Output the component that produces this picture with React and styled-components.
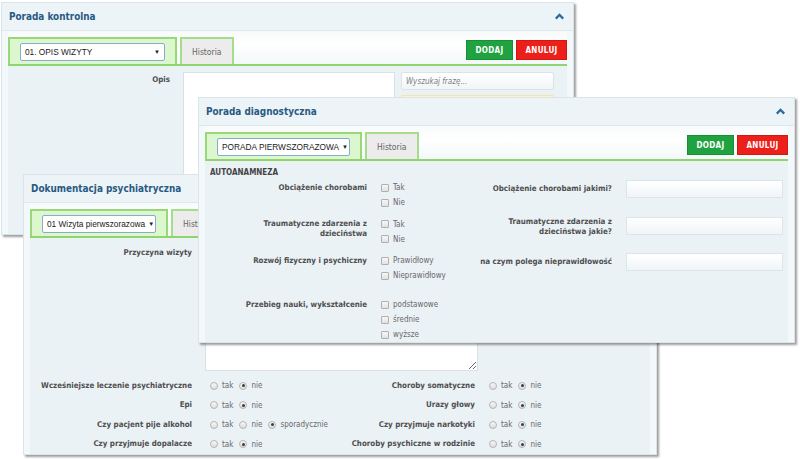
import React from 'react';
import styled, { createGlobalStyle } from 'styled-components';

const SANS = `"DejaVu Sans Condensed", "DejaVu Sans", Tahoma, sans-serif`;
const ARIAL = `"Liberation Sans", Arial, sans-serif`;

const Global = createGlobalStyle`
  html, body { margin: 0; padding: 0; background: #fff; }
  body { font-family: ${SANS}; font-stretch: semi-condensed; overflow: hidden; }
  * { box-sizing: border-box; }
`;

const Desktop = styled.main`
  position: relative;
  width: 800px;
  height: 459px;
  overflow: hidden;
  background: #fff;
`;

const Win = styled.section`
  position: absolute;
  left: ${(p) => p.$x}px;
  top: ${(p) => p.$y}px;
  width: ${(p) => p.$w}px;
  height: ${(p) => p.$h}px;
  z-index: ${(p) => p.$z};
  display: flex;
  flex-direction: column;
  overflow: hidden;
  background: #f3f8fa;
  border: 1px solid #dbe4e9;
  box-shadow: 2px 2px 2px rgba(0, 0, 0, 0.38);
`;

const Header = styled.header`
  flex: none;
  height: 28px;
  display: flex;
  align-items: center;
  justify-content: space-between;
  padding: 0 9px 1px 7px;
  background: #edf4f7;
  border-bottom: 1px solid #dfe8ed;
`;

const Title = styled.h2`
  margin: 0;
  font-family: ${SANS};
  font-size: 9.9px;
  font-weight: bold;
  color: #285a83;
`;

const Chevron = () => (
  <svg width="9" height="7" viewBox="0 0 10 7" aria-hidden="true">
    <path d="M5 0 L10 5 L8.2 6.8 L5 3.6 L1.8 6.8 L0 5 Z" fill="#2a6aa0" />
  </svg>
);

const Body = styled.div`
  flex: 1;
  display: flex;
  flex-direction: column;
  padding: 0 6px;
  min-height: 0;
`;

const TabBar = styled.nav`
  flex: none;
  height: 35px;
  padding-top: 6px;
  display: flex;
  align-items: stretch;
  gap: 3px;
  border-bottom: 2px solid #8fd46c;
  background: linear-gradient(#f7fafb, #ffffff 40%, #f3f8fa);
`;

const Tab = styled.div`
  flex: none;
  display: flex;
  align-items: center;
  justify-content: center;
  padding: 0 10px;
  border: 2px solid ${(p) => (p.$active ? '#98d878' : '#a6dd8a')};
  border-bottom: none;
  background: ${(p) => (p.$active ? '#dcf6cd' : '#ececec')};
  font-family: ${SANS};
  font-size: 8.5px;
  color: #666;
`;

const Select = styled.div`
  flex: none;
  width: ${(p) => p.$w}px;
  height: 18px;
  display: flex;
  align-items: center;
  justify-content: space-between;
  padding: 0 4px 0 4px;
  overflow: hidden;
  background: #fff;
  border: 1px solid #86acd6;
  border-radius: 2px;
  font-family: ${ARIAL};
  font-size: 8.3px;
  color: #1a1a1a;
  white-space: nowrap;
`;

const Caret = styled.span`
  flex: none;
  font-size: 6px;
  color: #222;
  margin-left: 3px;
`;

const Actions = styled.div`
  margin-left: auto;
  display: flex;
  gap: 3px;
  padding: 3px 0 4px;
`;

const Btn = styled.button`
  width: ${(p) => p.$w}px;
  height: 20px;
  padding: 0;
  border: 1px solid ${(p) => (p.$danger ? '#cf1a14' : '#178f33')};
  background: ${(p) => (p.$danger ? '#ec1f1a' : '#1fa23f')};
  color: #fff;
  font-family: ${SANS};
  font-size: 8px;
  font-weight: bold;
  letter-spacing: 0.3px;
`;

const Content = styled.div`
  flex: 1;
  min-height: 0;
  display: flex;
  flex-direction: column;
  padding: ${(p) => p.$pt}px 0 0 ${(p) => p.$pl || 0}px;
  background: #ebf2f6;
`;

const Line = styled.div`
  display: flex;
  align-items: flex-start;
`;

const FieldLabel = styled.div`
  flex: none;
  width: ${(p) => p.$w}px;
  padding-top: ${(p) => p.$pt || 0}px;
  text-align: right;
  font-family: ${SANS};
  font-size: 7.9px;
  font-weight: bold;
  line-height: 10px;
  color: #4f4f4f;
  white-space: nowrap;
`;

const Area = styled.textarea`
  flex: none;
  display: block;
  width: ${(p) => p.$w}px;
  height: ${(p) => p.$h}px;
  margin: 0 0 0 13px;
  padding: 0;
  background: #fff;
  border: 1px solid #d9e1e6;
  border-radius: 0;
  outline: none;
`;

const SideCol = styled.div`
  flex: none;
  width: 153px;
  margin-left: 6px;
  display: flex;
  flex-direction: column;
  gap: 5px;
`;

const Search = styled.div`
  height: 18px;
  display: flex;
  align-items: center;
  padding: 0 4px;
  border: 1px solid #dbe3e8;
  border-radius: 2px;
  background: linear-gradient(#ffffff, #f1f5f7);
  font-family: ${SANS};
  font-size: 8px;
  font-style: italic;
  color: #808080;
`;

const Notice = styled.div`
  height: 30px;
  background: #fbf3c9;
  border: 1px solid #f1e6aa;
`;

const Section = styled.h3`
  margin: 0 0 2px;
  font-family: ${SANS};
  font-size: 8px;
  font-weight: bold;
  line-height: 10px;
  color: #444;
`;

const Rows = styled.div`
  display: flex;
  flex-direction: column;
  gap: 6.5px;
`;

const QRow = styled.div`
  display: grid;
  grid-template-columns: 157px 88px 129px 157px;
  column-gap: 14px;
  align-items: start;
  margin-top: ${(p) => p.$mt || 0}px;
`;

const QLabel = styled.div`
  padding-top: 2.5px;
  text-align: right;
  font-family: ${SANS};
  font-size: 7.9px;
  font-weight: bold;
  line-height: 10px;
  color: #4f4f4f;
`;

const SideLabel = styled.div`
  min-height: 18px;
  display: flex;
  align-items: center;
  justify-content: flex-end;
  text-align: right;
  font-family: ${SANS};
  font-size: 7.9px;
  font-weight: bold;
  line-height: 10px;
  color: #4f4f4f;
  white-space: nowrap;
`;

const TextBox = styled.div`
  height: 18px;
  border: 1px solid #dce5ea;
  background: linear-gradient(#ffffff, #f0f5f8);
`;

const Options = styled.div`
  display: flex;
  flex-direction: ${(p) => (p.$column ? 'column' : 'row')};
  align-items: ${(p) => (p.$column ? 'flex-start' : 'center')};
  gap: ${(p) => (p.$column ? 0 : 6)}px;
  margin-left: ${(p) => p.$ml || 0}px;
  width: ${(p) => (p.$w ? `${p.$w}px` : 'auto')};
  flex: none;
`;

const OptItem = styled.label`
  height: 15px;
  display: flex;
  align-items: center;
  gap: 4px;
  font-family: ${SANS};
  font-size: 8px;
  color: #686868;
  white-space: nowrap;
`;

const Box = styled.span`
  width: 8px;
  height: 8px;
  border: 1px solid #b0b0b0;
  border-radius: 1px;
  background: linear-gradient(#f7f7f7, #e2e2e2);
`;

const Circle = styled.span`
  position: relative;
  width: 8px;
  height: 8px;
  border: 1px solid #b4b4b4;
  border-radius: 50%;
  background: linear-gradient(#f7f7f7, #dedede);
  &::after {
    content: '';
    display: ${(p) => (p.$on ? 'block' : 'none')};
    position: absolute;
    left: 1.5px;
    top: 1.5px;
    width: 3px;
    height: 3px;
    border-radius: 50%;
    background: #3c3c3c;
  }
`;

const Spacer = styled.div`
  flex: none;
  height: ${(p) => p.$h}px;
`;

const RadioRow = styled.div`
  height: 20px;
  display: flex;
  align-items: center;
`;

const Check = ({ children }) => (
  <OptItem>
    <Box />
    {children}
  </OptItem>
);

const Radio = ({ on, children }) => (
  <OptItem>
    <Circle $on={on} />
    {children}
  </OptItem>
);

const YesNo = ({ value, extra, ml, w }) => (
  <Options $ml={ml} $w={w}>
    <Radio on={value === 'tak'}>tak</Radio>
    <Radio on={value === 'nie'}>nie</Radio>
    {extra && <Radio on={value === extra}>{extra}</Radio>}
  </Options>
);

const radioRows = [
  { l: 'Wcześniejsze leczenie psychiatryczne', lv: 'nie', r: 'Choroby somatyczne', rv: 'nie' },
  { l: 'Epi', lv: 'nie', r: 'Urazy głowy', rv: 'nie' },
  { l: 'Czy pacjent pije alkohol', lv: 'sporadycznie', extra: 'sporadycznie', r: 'Czy przyjmuje narkotyki', rv: 'nie' },
  { l: 'Czy przyjmuje dopalacze', lv: 'nie', r: 'Choroby psychiczne w rodzinie', rv: 'nie' },
];

const WindowHead = ({ title }) => (
  <Header>
    <Title>{title}</Title>
    <Chevron />
  </Header>
);

const Tabs = ({ value, selectW, buttons }) => (
  <TabBar>
    <Tab $active>
      <Select $w={selectW}>
        <span>{value}</span>
        <Caret>▼</Caret>
      </Select>
    </Tab>
    <Tab>Historia</Tab>
    {buttons && (
      <Actions>
        <Btn $w={47}>DODAJ</Btn>
        <Btn $w={51} $danger>
          ANULUJ
        </Btn>
      </Actions>
    )}
  </TabBar>
);

export default function App() {
  return (
    <>
      <Global />
      <Desktop>
        <Win $x={1} $y={2} $w={573} $h={233} $z={1}>
          <WindowHead title="Porada kontrolna" />
          <Body>
            <Tabs value="01. OPIS WIZYTY" selectW={145} buttons />
            <Content $pt={6}>
              <Line>
                <FieldLabel $w={162} $pt={3}>
                  Opis
                </FieldLabel>
                <Area $w={212} $h={200} readOnly />
                <SideCol>
                  <Search>Wyszukaj frazę...</Search>
                  <Notice />
                </SideCol>
              </Line>
            </Content>
          </Body>
        </Win>

        <Win $x={23} $y={174} $w={634} $h={281} $z={2}>
          <WindowHead title="Dokumentacja psychiatryczna" />
          <Body>
            <Tabs value="01 Wizyta pierwszorazowa" selectW={114} />
            <Content $pt={9}>
              <Line>
                <FieldLabel $w={162} $pt={1}>
                  Przyczyna wizyty
                </FieldLabel>
                <Area $w={273} $h={124} readOnly />
              </Line>
              <Spacer $h={5} />
              {radioRows.map((r) => (
                <RadioRow key={r.l}>
                  <FieldLabel $w={162}>{r.l}</FieldLabel>
                  <YesNo value={r.lv} extra={r.extra} ml={18} w={120} />
                  <FieldLabel $w={145}>{r.r}</FieldLabel>
                  <YesNo value={r.rv} ml={14} />
                </RadioRow>
              ))}
            </Content>
          </Body>
        </Win>

        <Win $x={198} $y={97} $w={597} $h={246} $z={3}>
          <WindowHead title="Porada diagnostyczna" />
          <Body>
            <Tabs value="PORADA PIERWSZORAZOWA" selectW={133} buttons />
            <Content $pt={7} $pl={5}>
              <Section>AUTOANAMNEZA</Section>
              <Rows>
                <QRow>
                  <QLabel>Obciążenie chorobami</QLabel>
                  <Options $column>
                    <Check>Tak</Check>
                    <Check>Nie</Check>
                  </Options>
                  <SideLabel>Obciążenie chorobami jakimi?</SideLabel>
                  <TextBox />
                </QRow>
                <QRow>
                  <QLabel>
                    Traumatyczne zdarzenia z<br />
                    dzieciństwa
                  </QLabel>
                  <Options $column>
                    <Check>Tak</Check>
                    <Check>Nie</Check>
                  </Options>
                  <SideLabel>
                    Traumatyczne zdarzenia z<br />
                    dzieciństwa jakie?
                  </SideLabel>
                  <TextBox />
                </QRow>
                <QRow>
                  <QLabel>Rozwój fizyczny i psychiczny</QLabel>
                  <Options $column>
                    <Check>Prawidłowy</Check>
                    <Check>Nieprawidłowy</Check>
                  </Options>
                  <SideLabel>na czym polega nieprawidłowość</SideLabel>
                  <TextBox />
                </QRow>
                <QRow $mt={7.5}>
                  <QLabel>Przebieg nauki, wykształcenie</QLabel>
                  <Options $column>
                    <Check>podstawowe</Check>
                    <Check>średnie</Check>
                    <Check>wyższe</Check>
                  </Options>
                </QRow>
              </Rows>
            </Content>
          </Body>
        </Win>
      </Desktop>
    </>
  );
}
